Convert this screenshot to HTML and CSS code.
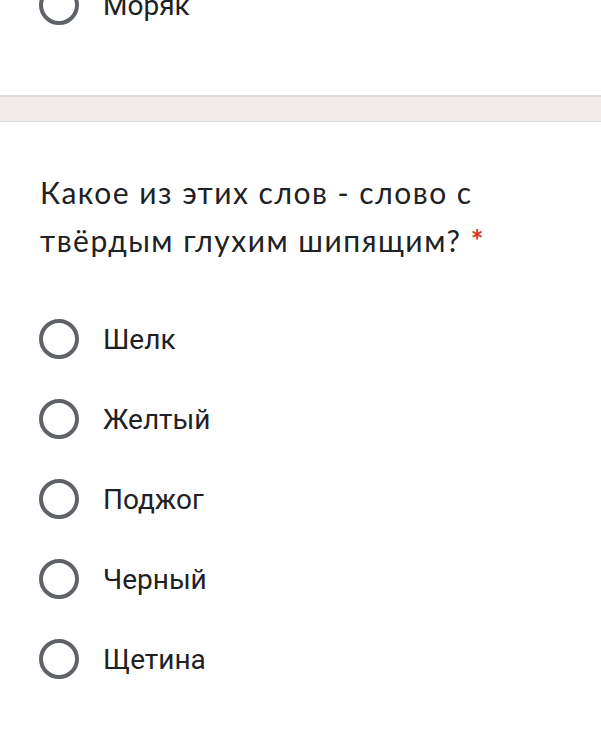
FILE: index.html
```html
<!DOCTYPE html>
<html lang="ru">
<head>
    <meta charset="UTF-8">
    <meta name="viewport" content="width=device-width, initial-scale=1.0">
    <title>Форма</title>
    <link rel="stylesheet" href="styles.css">
</head>
<body>

    <div class="card card-prev">
        <div class="option">
            <span class="radio"></span>
            <span class="option-label">Моряк</span>
        </div>
    </div>

    <div class="card card-question">
        <div class="question">Какое из этих слов - слово с твёрдым глухим шипящим? <span class="required">*</span></div>

        <div class="options">
            <div class="option">
                <span class="radio"></span>
                <span class="option-label">Шелк</span>
            </div>
            <div class="option">
                <span class="radio"></span>
                <span class="option-label">Желтый</span>
            </div>
            <div class="option">
                <span class="radio"></span>
                <span class="option-label">Поджог</span>
            </div>
            <div class="option">
                <span class="radio"></span>
                <span class="option-label">Черный</span>
            </div>
            <div class="option">
                <span class="radio"></span>
                <span class="option-label">Щетина</span>
            </div>
        </div>
    </div>

</body>
</html>
```

FILE: styles.css
```css
body {
    margin: 0;
    background: #f0ebe8;
    font-family: Roboto, "Noto Sans", sans-serif;
    color: #202124;
    overflow: hidden;
}
.card {
    background: #fff;
}
.card-prev {
    margin-top: -35px;
    padding-bottom: 50px;
    border-bottom: 2px solid #dcdcdc;
}
.card-question {
    margin-top: 24px;
    border-top: 1px solid #dcdcdc;
    padding: 46px 40px 60px 0;
}
.question {
    margin-left: 40px;
    font-family: Lato, "Open Sans", sans-serif;
    font-size: 30px;
    letter-spacing: 1.5px;
    line-height: 48px;
    max-width: 500px;
}
.required {
    color: #d93025;
    font-weight: bold;
    letter-spacing: 0;
}
.options {
    margin-top: 35px;
}
.option {
    display: flex;
    align-items: center;
    height: 80px;
}
.radio {
    box-sizing: border-box;
    width: 40px;
    height: 40px;
    margin-left: 39px;
    margin-right: 24px;
    border: 4px solid #5f6368;
    border-radius: 50%;
    flex-shrink: 0;
}
.option-label {
    font-size: 28px;
}
```
